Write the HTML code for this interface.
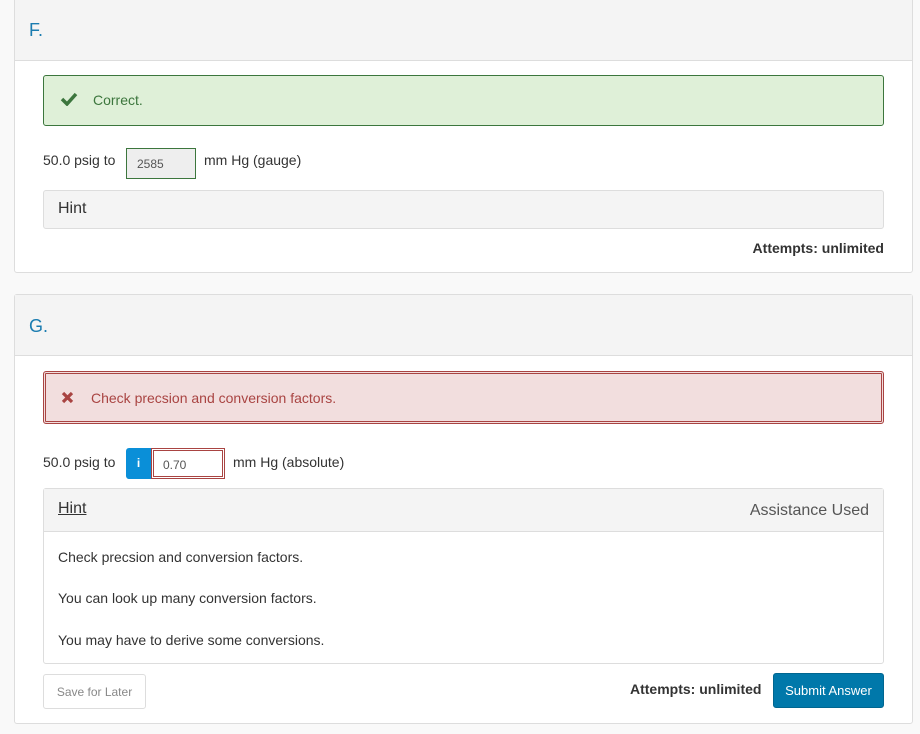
<!DOCTYPE html>
<html><head><style>
*{box-sizing:border-box;margin:0;padding:0}
body{width:920px;height:734px;background:#f9f9f9;font-family:"Liberation Sans",sans-serif;color:#333;position:relative;overflow:hidden;font-size:14px}
.a{position:absolute}
.card{position:absolute;left:14px;width:899px;background:#fff;border:1px solid #ddd;border-radius:3px}
.hd{position:absolute;left:0;right:0;top:0;background:#f4f4f4;border-bottom:1px solid #ddd}
.t{color:#1a7cb0;font-size:18px;position:absolute;left:14px}
</style></head><body>
<div class="card" style="top:-4px;height:277px">
 <div class="hd" style="height:64px"><span class="t" style="top:23px">F.</span></div>
 <div class="a" style="left:28px;top:78px;width:841px;height:51px;background:#dff0d8;border:1px solid #3c763d;border-radius:3px">
  <svg class="a" style="left:16px;top:16px" width="18" height="14" viewBox="0 0 18 14"><path d="M2 7l5 5 9-10" stroke="#3c763d" stroke-width="3.5" fill="none"/></svg>
  <span class="a" style="left:49px;top:16px;color:#3c763d;font-size:14px">Correct.</span>
 </div>
 <span class="a" style="left:28px;top:155px">50.0 psig to</span>
 <div class="a" style="left:111px;top:151px;width:70px;height:31px;background:#eee;border:1px solid #3c763d;font-size:12px;color:#555;padding:8px 0 0 10px">2585</div>
 <span class="a" style="left:189px;top:155px">mm Hg (gauge)</span>
 <div class="a" style="left:28px;top:193px;width:841px;height:39px;background:#f4f4f4;border:1px solid #ddd;border-radius:3px;font-size:16px;padding:9px 0 0 14px">Hint</div>
 <span class="a" style="right:28px;top:243px;font-weight:bold">Attempts: unlimited</span>
</div>
<div class="card" style="top:294px;height:430px">
 <div class="hd" style="height:61px"><span class="t" style="top:21px">G.</span></div>
 <div class="a" style="left:28px;top:76px;width:841px;height:53px;background:#f2dede;border:1px solid #a94442;box-shadow:inset 0 0 0 1px #f2dede,inset 0 0 0 2px #a94442;border-radius:3px">
  <svg class="a" style="left:17px;top:19px" width="13" height="13" viewBox="0 0 13 13"><path d="M2 2l9 9M11 2l-9 9" stroke="#a94442" stroke-width="3.2"/></svg>
  <span class="a" style="left:47px;top:18px;color:#a94442">Check precsion and conversion factors.</span>
 </div>
 <span class="a" style="left:28px;top:159px">50.0 psig to</span>
 <div class="a" style="left:111px;top:153px;width:25px;height:31px;background:#0a8fd8;border-radius:3px 0 0 3px;color:#fff;font-weight:bold;font-size:12px;text-align:center;padding-top:8px">i</div>
 <div class="a" style="left:136px;top:153px;width:74px;height:31px;border:1px solid #a94442;box-shadow:inset 0 0 0 1px #fff,inset 0 0 0 2px #a94442;font-size:12px;color:#555;padding:9px 0 0 11px">0.70</div>
 <span class="a" style="left:218px;top:159px">mm Hg (absolute)</span>
 <div class="a" style="left:28px;top:193px;width:841px;height:176px;border:1px solid #ddd;border-radius:3px">
  <div class="a" style="left:0;right:0;top:0;height:43px;background:#f4f4f4;border-bottom:1px solid #ddd"></div>
  <span class="a" style="left:14px;top:11px;font-size:16px;text-decoration:underline">Hint</span>
  <span class="a" style="right:14px;top:13px;font-size:16px;color:#555">Assistance Used</span>
  <span class="a" style="left:14px;top:60px">Check precsion and conversion factors.</span>
  <span class="a" style="left:14px;top:101px">You can look up many conversion factors.</span>
  <span class="a" style="left:14px;top:143px">You may have to derive some conversions.</span>
 </div>
 <div class="a" style="left:28px;top:379px;width:103px;height:35px;border:1px solid #ddd;border-radius:3px;font-size:12px;color:#888;text-align:center;padding-top:10px">Save for Later</div>
 <span class="a" style="left:615px;top:386px;font-weight:bold">Attempts: unlimited</span>
 <div class="a" style="left:758px;top:378px;width:111px;height:35px;background:#0078aa;border:1px solid #006690;border-radius:3px;color:#fff;font-size:13px;text-align:center;padding-top:9px">Submit Answer</div>
</div>
</body></html>
